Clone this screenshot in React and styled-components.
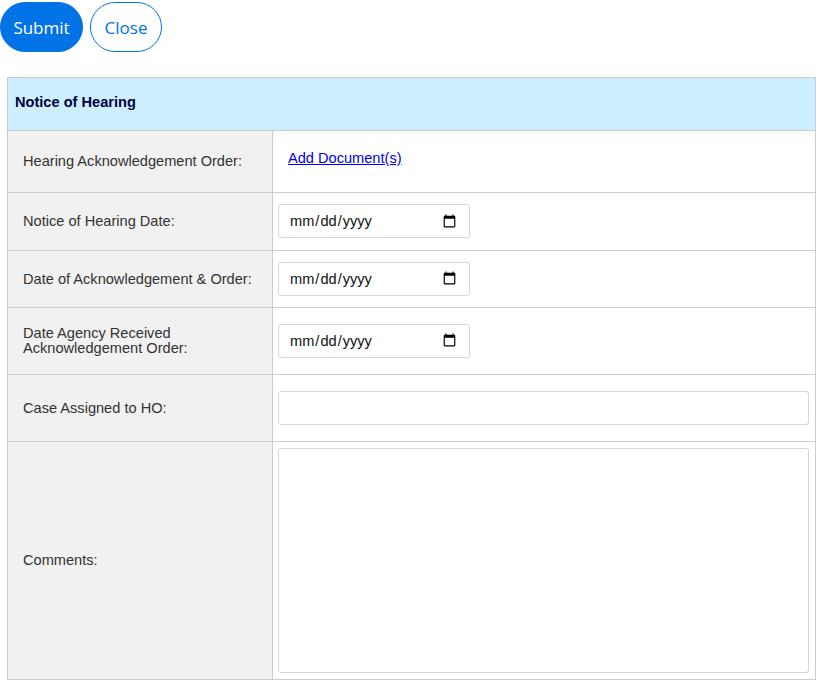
import React from "react";
import styled, { createGlobalStyle } from "styled-components";

const Global = createGlobalStyle`
  html, body { margin: 0; padding: 0; background: #fff; }
  body { font-family: "Liberation Sans", Arial, sans-serif; }
  * { box-sizing: border-box; }
`;

const Page = styled.div`
  width: 816px;
  padding-top: 2px;
`;

const Toolbar = styled.div`
  display: flex;
  gap: 7px;
  height: 50px;
`;

const PillButton = styled.button`
  height: 50px;
  width: ${(p) => (p.$primary ? "83px" : "72px")};
  padding: 0;
  border-radius: 25px;
  border: 1px solid #0073e6;
  background: ${(p) => (p.$primary ? "#0073e6" : "#fff")};
  color: ${(p) => (p.$primary ? "#fff" : "#0073e6")};
  font-family: "Open Sans", "Noto Sans", sans-serif;
  font-size: 17px;
  cursor: pointer;
`;

const Table = styled.div`
  margin: 25px 0 0 7px;
  width: 809px;
  border: 1px solid #ccc;
  display: grid;
  grid-template-columns: 265px 1fr;
`;

const Header = styled.div`
  grid-column: 1 / span 2;
  height: 53px;
  background: #cceeff;
  display: flex;
  align-items: center;
  padding: 0 0 5px 7px;
  font-size: 14.6px;
  font-weight: bold;
  color: #000040;
  border-bottom: 1px solid #ccc;
`;

const Label = styled.div`
  height: ${(p) => p.$h}px;
  background: #f1f1f1;
  border-right: 1px solid #ccc;
  border-bottom: ${(p) => (p.$last ? "none" : "1px solid #ccc")};
  display: flex;
  align-items: center;
  padding: 0 15px;
  font-size: 14.6px;
  line-height: 15px;
  color: #333;
`;

const Cell = styled.div`
  height: ${(p) => p.$h}px;
  border-bottom: ${(p) => (p.$last ? "none" : "1px solid #ccc")};
  display: flex;
  align-items: ${(p) => (p.$top ? "flex-start" : "center")};
  padding: ${(p) => (p.$top ? "6px 6px 6px 5px" : "0 6px 1px 5px")};
`;

const DocLink = styled.a`
  margin: -6px 0 0 10px;
  font-size: 14.6px;
  color: #0000ee;
  text-decoration: underline;
  cursor: pointer;
`;

const DateInput = styled.input`
  width: 192px;
  height: 34px;
  border: 1px solid #d6d6d6;
  border-radius: 3px;
  padding: 0 10px;
  font-family: "Liberation Sans", Arial, sans-serif;
  font-size: 14.6px;
  color: #111;
  background: #fff;
`;

const TextInput = styled.input`
  width: 100%;
  height: 34px;
  border: 1px solid #d6d6d6;
  border-radius: 3px;
  background: #fff;
`;

const TextArea = styled.textarea`
  width: 100%;
  height: 225px;
  border: 1px solid #d6d6d6;
  border-radius: 3px;
  resize: none;
  background: #fff;
`;

export default function App() {
  return (
    <Page>
      <Global />
      <Toolbar>
        <PillButton $primary>Submit</PillButton>
        <PillButton>Close</PillButton>
      </Toolbar>
      <Table>
        <Header>Notice of Hearing</Header>

        <Label $h={62}>Hearing Acknowledgement Order:</Label>
        <Cell $h={62}>
          <DocLink>Add Document(s)</DocLink>
        </Cell>

        <Label $h={58}>Notice of Hearing Date:</Label>
        <Cell $h={58}>
          <DateInput type="date" />
        </Cell>

        <Label $h={57}>Date of Acknowledgement &amp; Order:</Label>
        <Cell $h={57}>
          <DateInput type="date" />
        </Cell>

        <Label $h={67}>Date Agency Received Acknowledgement Order:</Label>
        <Cell $h={67}>
          <DateInput type="date" />
        </Cell>

        <Label $h={67}>Case Assigned to HO:</Label>
        <Cell $h={67}>
          <TextInput type="text" />
        </Cell>

        <Label $h={237} $last>Comments:</Label>
        <Cell $h={237} $last $top>
          <TextArea />
        </Cell>
      </Table>
    </Page>
  );
}
